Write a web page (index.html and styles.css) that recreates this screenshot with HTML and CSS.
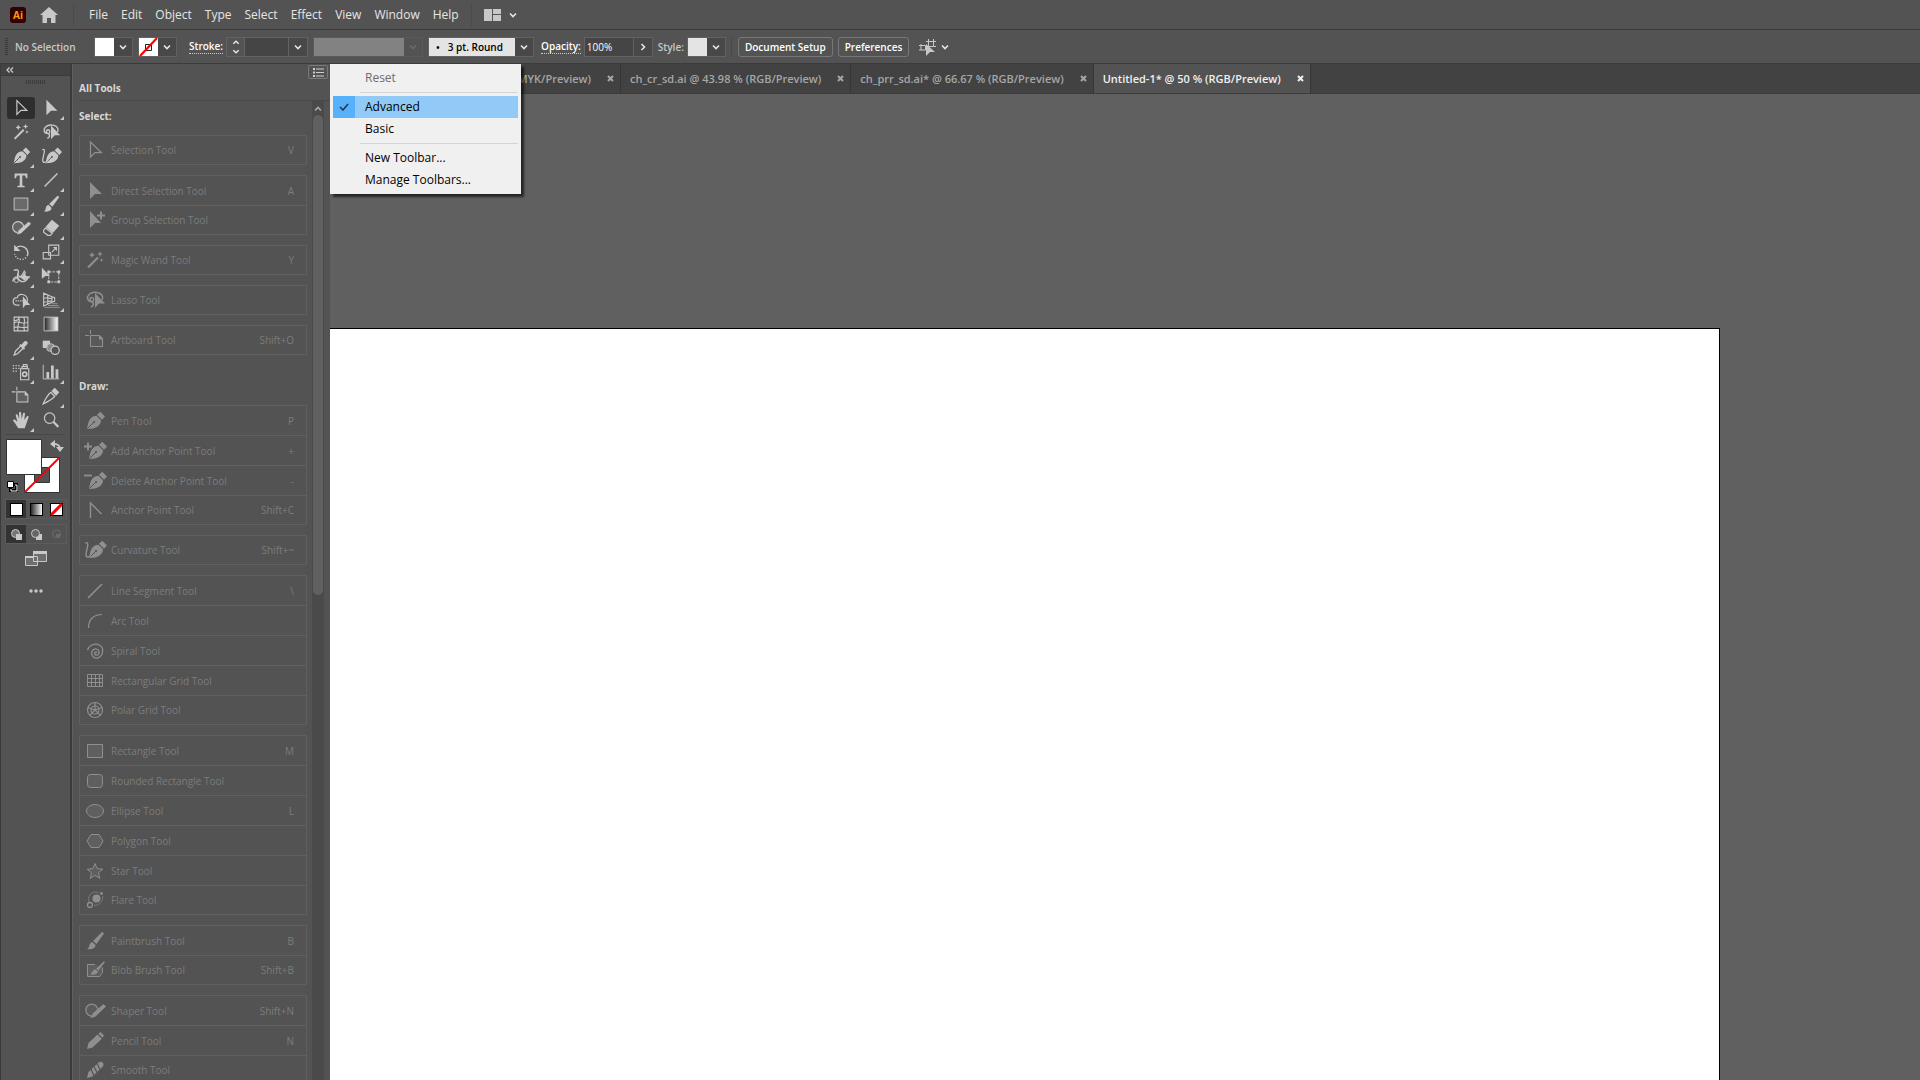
FILE: index.html
```html
<!DOCTYPE html>
<html lang="en">
<head>
	<meta charset="utf-8">
	<title>Untitled-1* @ 50 % (RGB/Preview)</title>
	<link rel="stylesheet" href="styles.css">
</head>
<body>
<!-- icon sprite -->
<svg class="sprite" aria-hidden="true">
	<defs>
		<linearGradient id="fade"><stop offset="0" stop-color="#222"/><stop offset="1" stop-color="#fff"/></linearGradient>
	</defs>
	<symbol id="chevron" viewBox="0 0 10 10"><path d="M2 3.5l3 3 3-3" fill="none" stroke="currentColor" stroke-width="1.6"/></symbol>
	<symbol id="selection" viewBox="0 0 24 24"><path d="M7.5 4v15l4.400-4.400h6.400z" fill="none" stroke="currentColor" stroke-width="1.300"/></symbol>
	<symbol id="direct" viewBox="0 0 24 24"><path d="M7 3v17l5-5h7z" fill="currentColor"/></symbol>
	<symbol id="group" viewBox="0 0 24 24"><path d="M7 3v17l5-5h6z" fill="currentColor"/><path d="M18 3.500v8M14 7.500h8" stroke="currentColor" stroke-width="2"/></symbol>
	<symbol id="wand" viewBox="0 0 24 24"><path d="M5 19.500L15 9.500" stroke="currentColor" stroke-width="2.200"/><path d="M9 4l.9 2.100L12 7l-2.100.9L9 10l-.9-2.100L6 7l2.100-.9zM17 3l.8 2.200L20 6l-2.200.8L17 9l-.8-2.200L14 6l2.200-.8zM18.500 10l.6 1.400 1.400.6-1.400.6-.6 1.400-.6-1.400-1.400-.6 1.400-.6z" fill="currentColor"/></symbol>
	<symbol id="lasso" viewBox="0 0 24 24"><path d="M9 13.500C4 14 3.500 9 6 6.500c4-3.500 12-2.500 13.500 2 .4 1.200 0 2.500-.5 3.500M9 14c2.500-1 2-4.500-.3-4.500S6.500 13 9 14s1.500 4-1 5" fill="none" stroke="currentColor" stroke-width="1.500"/><path d="M12 5v15l4-4.500h6z" fill="currentColor"/></symbol>
	<symbol id="pen" viewBox="0 0 24 24"><path d="M4 20c1-4 1-8 4-11 1.500-1.500 3.500-2 5.500-2.200l4.500 4.400c0 2-.8 4-2.500 5.500C12 20 8 19.500 4 20zM14 5.800l3.300-3 4.700 4.700-3 3.300z" fill="currentColor"/><path d="M4.500 19.500l6-6" stroke="#535353"/><circle cx="11" cy="13" r="1.100" fill="#535353"/></symbol>
	<symbol id="pen-add" viewBox="0 0 24 24"><use href="#pen" x="2"/><path d="M5 3.500v8M1 7.500h8" stroke="currentColor" stroke-width="1.800"/></symbol>
	<symbol id="pen-del" viewBox="0 0 24 24"><use href="#pen" x="2"/><path d="M1 6.500h8" stroke="currentColor" stroke-width="1.800"/></symbol>
	<symbol id="anchor" viewBox="0 0 24 24"><path d="M7.500 20V5L18.500 16" fill="none" stroke="currentColor" stroke-width="1.400"/></symbol>
	<symbol id="curvature" viewBox="0 0 24 24"><use href="#pen" x="2"/><path d="M2.500 5c3-1 2.500 2 1.500 6s-2 8 1 8 2.500-2 4-4" fill="none" stroke="currentColor" stroke-width="1.400"/></symbol>
	<symbol id="type" viewBox="0 0 24 24"><path d="M5 5h14v5h-1.500l-1-3H13.400v11l2.600.6V20H8v-1.400l2.600-.6V7H7.500l-1 3H5z" fill="currentColor"/></symbol>
	<symbol id="line" viewBox="0 0 24 24"><path d="M5 19L19 5" stroke="currentColor" stroke-width="1.600"/></symbol>
	<symbol id="rect" viewBox="0 0 24 24"><path d="M4.500 5.500h15v13h-15z" fill="currentColor" fill-opacity=".2" stroke="currentColor"/></symbol>
	<symbol id="brush" viewBox="0 0 24 24"><path d="M10 12L18.500 3.500c1.500-1 2.800.4 2 1.800L13.500 15zM9.500 13.200l3 2.800c.3 3-3.500 4.700-8.500 4.200 2-1.200 2-2.500 2.500-4.500s2-2.500 3-2.500z" fill="currentColor"/></symbol>
	<symbol id="shaper" viewBox="0 0 24 24"><path d="M14.500 13A6 6 0 1 0 8 17" fill="currentColor" fill-opacity=".15" stroke="currentColor" stroke-width="1.300"/><path d="M8 18.500l2-4L20.500 5.500l2 2L12 17.500z" fill="currentColor" stroke="currentColor" stroke-width=".8"/></symbol>
	<symbol id="eraser" viewBox="0 0 24 24"><path d="M13 3l8 6.500-7 8-8-6.500z" fill="currentColor"/><path d="M6 12l7.300 5.800-2 2.200H8.500L4 16.500v-2z" fill="none" stroke="currentColor" stroke-width="1.300"/></symbol>
	<symbol id="rotate" viewBox="0 0 24 24"><path d="M6 8.500C10 3 19 6 19.500 13c0 1.500-.4 2.500-.8 3.500" fill="none" stroke="currentColor" stroke-width="1.500"/><path d="M4.500 4v7h7z" fill="currentColor"/><path d="M17.500 18C14 21.500 7 21 5 14" fill="none" stroke="currentColor" stroke-width="1.400" stroke-dasharray="1.500 1.500"/></symbol>
	<symbol id="scale" viewBox="0 0 24 24"><path d="M9.500 4.500h11v11h-11zM3.500 12.500h8v7h-8zM13 12l4-4" fill="none" stroke="currentColor" stroke-width="1.200"/><path d="M14 6.500h4.500V11z" fill="currentColor"/></symbol>
	<symbol id="width" viewBox="0 0 24 24"><path d="M4 6c4-2 6 0 5 3s-2 4 1 4 5-5 6-7M3 18c1-5 4-6 6-3s5 4 8 2 2-4 5-4" fill="none" stroke="currentColor" stroke-width="1.500"/><circle cx="7" cy="17" r="2.200" fill="#535353" stroke="currentColor"/><path d="M8 8c2 4 3 5 5 4s2-5 5-5c-3 4 0 6 3 5-1 4-5 6-8 3-2-2-5-2-5-7z" fill="currentColor"/></symbol>
	<symbol id="transform" viewBox="0 0 24 24"><path d="M9.500 7.500h11v11h-11z" fill="none" stroke="currentColor" stroke-dasharray="3 1"/><path d="M8 6h3v3H8zM19 6h3v3h-3zM8 17h3v3H8zM19 17h3v3h-3zM2 3v12l4-3h5z" fill="currentColor"/></symbol>
	<symbol id="builder" viewBox="0 0 24 24"><path d="M10.500 17.500H8c-6 0-6-8 0-8 1-5 10-5 11 2v2" fill="none" stroke="currentColor" stroke-width="1.300"/><path d="M6 13h9" stroke="currentColor" stroke-width="1.400" stroke-dasharray="1.500 1"/><path d="M14 8v13l3-3.500h5z" fill="currentColor"/></symbol>
	<symbol id="perspective" viewBox="0 0 24 24"><path d="M4 4.500v14l9-4V8.500zM4 9.500l9 1M4 14.500l9-1.500M8.500 6.500v10M13 8.500l3 1v4l-3 1" fill="none" stroke="currentColor" stroke-width="1.200"/><path d="M13 16h6M9 18h11M5 20h17" stroke="currentColor" stroke-opacity=".6"/></symbol>
	<symbol id="mesh" viewBox="0 0 24 24"><path d="M4.500 4.500h15v15h-15zM4.500 11c4-4 9 3 15-1M4.500 16c5-3 9 2 15-1M9 4.500c4 5-3 9 0 15M15 4.500c3 5-2 10 1 15M4.500 8c3 1 5-1 6-3.500" fill="none" stroke="currentColor" stroke-width="1.200"/></symbol>
	<symbol id="gradient" viewBox="0 0 24 24"><path d="M4.500 4.500h15v15h-15z" fill="url(#fade)" stroke="currentColor"/></symbol>
	<symbol id="dropper" viewBox="0 0 24 24"><path d="M12.500 8.500l3-3.500c2-2 5 .8 3.300 3l-3.300 3.500 1 1-1.500 1.500-5-5L11.500 7.500z" fill="currentColor"/><path d="M11.500 10L6 15.500l-1.500 4.200 4-1.700L14 12.500" fill="none" stroke="currentColor" stroke-width="1.400"/></symbol>
	<symbol id="blend" viewBox="0 0 24 24"><path d="M3 4h8v8H3z" fill="currentColor"/><rect x="7.500" y="7.500" width="8" height="8" rx="3" fill="#8a8a8a" stroke="currentColor"/><circle cx="16.500" cy="14.500" r="4.500" fill="#535353" stroke="currentColor" stroke-width="1.300"/></symbol>
	<symbol id="sprayer" viewBox="0 0 24 24"><path d="M11.500 8.500h9v12h-9zM13 6h6v2h-6zM14.500 4h4v2h-4z" fill="none" stroke="currentColor" stroke-width="1.200"/><circle cx="16" cy="14.500" r="2.300" fill="none" stroke="currentColor" stroke-width="1.800"/><path d="M3 5h9M3 8h8M3 11h5" stroke="currentColor" stroke-width="1.500" stroke-dasharray="1.500 1.500"/></symbol>
	<symbol id="graph" viewBox="0 0 24 24"><path d="M3.500 4v15.500H21" fill="none" stroke="currentColor"/><path d="M7 12h3v7H7zM12 5h3v14h-3zM17 9h3v10h-3z" fill="currentColor"/></symbol>
	<symbol id="artboard" viewBox="0 0 24 24"><path d="M7.500 7.500h9l3 3v8h-12zM7.500 2v4M2 7.500h4" fill="currentColor" fill-opacity=".12" stroke="currentColor" stroke-width="1.100"/><path d="M16 7.500v4h4z" fill="currentColor"/></symbol>
	<symbol id="slice" viewBox="0 0 24 24"><path d="M3.500 20.500C6 15 8 11 12 8l4 4.500c-3 3-7 5.500-12.500 8z" fill="none" stroke="currentColor" stroke-width="1.400"/><path d="M12.500 6.500L16 3l5 5-3.500 4z" fill="currentColor"/></symbol>
	<symbol id="hand" viewBox="0 0 24 24"><path d="M9 21C7 18 5.500 15 3.500 13c-.8-1 .8-2.200 2-1.200L8 14 6.300 7c-.3-1.500 1.700-1.800 2.200-.5L10 11 9.800 4.500c0-1.500 2.300-1.500 2.400 0L12.700 11l1.500-6c.3-1.300 2.300-1 2.200.5L15.500 12l3-4c.8-1 2.300-.2 1.800 1L17.500 17 16 21z" fill="currentColor"/></symbol>
	<symbol id="zoom" viewBox="0 0 24 24"><circle cx="10.500" cy="10" r="5.700" fill="none" stroke="currentColor" stroke-width="1.300"/><path d="M14.500 14l5.500 5.500" stroke="currentColor" stroke-width="2.400"/></symbol>
	<symbol id="arc" viewBox="0 0 24 24"><path d="M5.500 19C5.500 11 10 5.500 19 5.500" fill="none" stroke="currentColor" stroke-width="1.200"/></symbol>
	<symbol id="spiral" viewBox="0 0 24 24"><path d="M4.500 11C6 6 12 3.500 17 6.500c4.500 3 3 11-2.500 12.500-5 1-7.500-5-4.500-8 3-2.500 7 0 6 3.500-1 2.500-4.500 2-4.300-.5.100-1.300 1.800-1.500 2.300-.3" fill="none" stroke="currentColor" stroke-width="1.300"/></symbol>
	<symbol id="grid" viewBox="0 0 24 24"><path d="M4.500 5.500h15v12h-15zM4.500 9.500h15M4.500 13.500h15M8.500 5.500v12M12.500 5.500v12M16.500 5.500v12" fill="none" stroke="currentColor"/></symbol>
	<symbol id="polar" viewBox="0 0 24 24"><g fill="none" stroke="currentColor" stroke-width="1.200"><circle cx="12" cy="12" r="7.500"/><circle cx="12" cy="12" r="4"/><path d="M12 4.500V12L6.500 17.500M12 12l5.500 5.500M12 12l7-2.500M12 12L5 9.500"/></g></symbol>
	<symbol id="round-rect" viewBox="0 0 24 24"><rect x="4.500" y="5.500" width="15" height="13" rx="3" fill="currentColor" fill-opacity=".2" stroke="currentColor"/></symbol>
	<symbol id="ellipse" viewBox="0 0 24 24"><ellipse cx="12" cy="12" rx="8.500" ry="6.500" fill="currentColor" fill-opacity=".2" stroke="currentColor"/></symbol>
	<symbol id="polygon" viewBox="0 0 24 24"><path d="M4 12l4-6.500h8l4 6.500-4 6.500H8z" fill="currentColor" fill-opacity=".2" stroke="currentColor"/></symbol>
	<symbol id="star" viewBox="0 0 24 24"><path d="M12 4.500l2.200 5.200 5.600.5-4.300 3.600 1.300 5.500L12 16.400l-4.800 2.900 1.300-5.500-4.300-3.600 5.600-.5z" fill="currentColor" fill-opacity=".2" stroke="currentColor"/></symbol>
	<symbol id="flare" viewBox="0 0 24 24"><circle cx="13.500" cy="10.500" r="4" fill="currentColor"/><path d="M6 14C3.500 6 12 2 16 5M19.500 8c1 5-3 9.500-8.500 9.500" fill="none" stroke="currentColor" stroke-opacity=".6"/><circle cx="7" cy="17" r="2.500" fill="none" stroke="currentColor" stroke-width="1.300"/><circle cx="18.500" cy="5.500" r="1.400" fill="currentColor"/></symbol>
	<symbol id="blob" viewBox="0 0 24 24"><path d="M12 6.500H4.500v12h12l3-4v-5" fill="currentColor" fill-opacity=".2" stroke="currentColor"/><path d="M13 11l7.500-7.500 1.500.5-6.500 8.500zM12.500 11.500l2.500 2c-1 3-4 3.500-8 3 2.500-1.500 2-4.500 5.500-5z" fill="currentColor"/></symbol>
	<symbol id="pencil" viewBox="0 0 24 24"><path d="M4 20l1.500-6 9-8.500 4.300 4.200L9.500 18.500zM15.500 4.700L17.500 3 21 6.500l-1.500 2.200z" fill="currentColor"/></symbol>
	<symbol id="smooth" viewBox="0 0 24 24"><path d="M4 20l1.500-6 10-9.500c3-2.500 6.500 1 4.300 4L9.500 18.500z" fill="currentColor"/><path d="M8 11l3 7M11 8.500l3 6M14 5.500l3 6" stroke="#535353" stroke-width="1.200"/></symbol>
</svg>

<header class="menubar">
	<svg class="logo" viewBox="0 0 16 16" role="img" aria-label="Ai"><rect width="16" height="16" rx="3" fill="#300"/><text x="8" y="12" text-anchor="middle">Ai</text></svg>
	<svg class="home" viewBox="0 0 18 16"><path d="M9 0l9 8h-2.500v8h-4.500v-5H7v5H2.500V8H0z" fill="#c8c8c8"/></svg>
	<nav class="menus">
		<a href="#">File</a>
		<a href="#">Edit</a>
		<a href="#">Object</a>
		<a href="#">Type</a>
		<a href="#">Select</a>
		<a href="#">Effect</a>
		<a href="#">View</a>
		<a href="#">Window</a>
		<a href="#">Help</a>
	</nav>
	<button class="workspace" aria-label="Arrange documents">
		<svg width="17" height="12" viewBox="0 0 17 12"><path d="M0 0h8v12H0zM9 0h8v5H9zM9 6h8v6H9z" fill="#c8c8c8"/></svg>
		<svg class="chev"><use href="#chevron"/></svg>
	</button>
</header>

<section class="options">
	<span class="grip"></span>
	<span class="status">No Selection</span>
	<div class="field fill">
		<button class="swatch" aria-label="Fill"></button>
		<button class="drop" aria-label="Fill options"><svg class="chev"><use href="#chevron"/></svg></button>
	</div>
	<div class="field stroke">
		<button class="swatch" aria-label="Stroke color"><svg width="19" height="20" viewBox="0 0 19 20"><path d="M6.500 7.500h6v6h-6z" fill="#fff" stroke="#222"/><path d="M1 19L18 1" stroke="#f00" stroke-width="2.200"/></svg></button>
		<button class="drop" aria-label="Stroke options"><svg class="chev"><use href="#chevron"/></svg></button>
	</div>
	<label class="caption link" for="weight">Stroke:</label>
	<div class="field weight">
		<button class="stepper" aria-label="Step stroke weight"><svg class="chev up"><use href="#chevron"/></svg><svg class="chev"><use href="#chevron"/></svg></button>
		<input id="weight" type="text">
		<button class="drop" aria-label="Stroke weights"><svg class="chev"><use href="#chevron"/></svg></button>
	</div>
	<div class="field profile">
		<span class="profile-box"></span>
		<button class="drop" aria-label="Width profile" disabled><svg class="chev"><use href="#chevron"/></svg></button>
	</div>
	<div class="field brush">
		<select aria-label="Brush definition"><option>•&nbsp;&nbsp;&nbsp;3 pt. Round</option></select>
		<button class="drop" aria-label="Brushes"><svg class="chev"><use href="#chevron"/></svg></button>
	</div>
	<label class="caption link" for="opacity">Opacity:</label>
	<div class="field opacity">
		<input id="opacity" type="text" value="100%">
		<button class="drop" aria-label="Opacity slider"><svg class="chev right"><use href="#chevron"/></svg></button>
	</div>
	<span class="caption">Style:</span>
	<div class="field style">
		<button class="swatch" aria-label="Graphic style"></button>
		<button class="drop" aria-label="Graphic styles"><svg class="chev"><use href="#chevron"/></svg></button>
	</div>
	<div class="doc-buttons">
		<button>Document Setup</button>
		<button>Preferences</button>
	</div>
	<button class="isolate" aria-label="Select similar objects">
		<svg width="17" height="18" viewBox="0 0 17 18"><path d="M2 7.500h4.500V12H2zM9.500 3.500h5v5h-5zM0 7.500h2M0 12h2M9.500 1v2.500H7M14.500 1v2.500H17M14.500 8.500H17M2 6v1" fill="none" stroke="#c8c8c8"/><path d="M7 6v12l4-4h5z" fill="#c8c8c8"/></svg>
		<svg class="chev"><use href="#chevron"/></svg>
	</button>
</section>

<div class="workarea">
	<aside class="toolbar">
		<div class="toolbar-head"><svg width="8" height="6" viewBox="0 0 8 6"><path d="M3.500 .5L1 3l2.500 2.500M7 .5L4.500 3 7 5.500" fill="none" stroke="#ccc" stroke-width="1.300"/></svg></div>
		<div class="toolbar-grip"></div>
		<div class="tools">
			<button class="active" aria-label="Selection Tool"><svg><use href="#selection"/></svg></button>
			<button class="more" aria-label="Direct Selection Tool"><svg><use href="#direct"/></svg></button>
			<button aria-label="Magic Wand Tool"><svg><use href="#wand"/></svg></button>
			<button aria-label="Lasso Tool"><svg><use href="#lasso"/></svg></button>
			<button class="more" aria-label="Pen Tool"><svg><use href="#pen"/></svg></button>
			<button aria-label="Curvature Tool"><svg><use href="#curvature"/></svg></button>
			<button class="more" aria-label="Type Tool"><svg><use href="#type"/></svg></button>
			<button class="more" aria-label="Line Segment Tool"><svg><use href="#line"/></svg></button>
			<button class="more" aria-label="Rectangle Tool"><svg><use href="#rect"/></svg></button>
			<button class="more" aria-label="Paintbrush Tool"><svg><use href="#brush"/></svg></button>
			<button class="more" aria-label="Shaper Tool"><svg><use href="#shaper"/></svg></button>
			<button class="more" aria-label="Eraser Tool"><svg><use href="#eraser"/></svg></button>
			<button class="more" aria-label="Rotate Tool"><svg><use href="#rotate"/></svg></button>
			<button class="more" aria-label="Scale Tool"><svg><use href="#scale"/></svg></button>
			<button class="more" aria-label="Width Tool"><svg><use href="#width"/></svg></button>
			<button aria-label="Free Transform Tool"><svg><use href="#transform"/></svg></button>
			<button class="more" aria-label="Shape Builder Tool"><svg><use href="#builder"/></svg></button>
			<button class="more" aria-label="Perspective Grid Tool"><svg><use href="#perspective"/></svg></button>
			<button aria-label="Mesh Tool"><svg><use href="#mesh"/></svg></button>
			<button aria-label="Gradient Tool"><svg><use href="#gradient"/></svg></button>
			<button class="more" aria-label="Eyedropper Tool"><svg><use href="#dropper"/></svg></button>
			<button aria-label="Blend Tool"><svg><use href="#blend"/></svg></button>
			<button class="more" aria-label="Symbol Sprayer Tool"><svg><use href="#sprayer"/></svg></button>
			<button class="more" aria-label="Column Graph Tool"><svg><use href="#graph"/></svg></button>
			<button aria-label="Artboard Tool"><svg><use href="#artboard"/></svg></button>
			<button class="more" aria-label="Slice Tool"><svg><use href="#slice"/></svg></button>
			<button class="more" aria-label="Hand Tool"><svg><use href="#hand"/></svg></button>
			<button aria-label="Zoom Tool"><svg><use href="#zoom"/></svg></button>
		</div>
		<div class="colors">
			<svg width="60" height="56" viewBox="0 0 60 56">
				<path d="M18.500 18.500h35v35h-35z" fill="#fff" stroke="#333"/>
				<path d="M28.500 28.500h15v15h-15z" fill="#535353" stroke="#333"/>
				<path d="M19 53L53 19" stroke="#f00" stroke-width="2"/>
				<path d="M.5 .5h35v35H.5z" fill="#fff" stroke="#333"/>
				<path d="M48 5c4 0 6 1 6 6" fill="none" stroke="#c8c8c8" stroke-width="2"/>
				<path d="M49 1v8l-5-4zM50 8h8l-4 5z" fill="#c8c8c8"/>
				<path d="M4.500 45.500h6v6h-6z" fill="none" stroke="#000" stroke-width="3"/>
				<path d="M1.500 42.500h6v6h-6z" fill="#fff" stroke="#000"/>
				<path d="M9 46h2v6H5v-2" fill="none" stroke="#fff"/>
			</svg>
		</div>
		<div class="modes">
			<button class="active" aria-label="Color"><svg><rect x=".5" y=".5" width="12" height="12" fill="#fff" stroke="#000"/></svg></button>
			<button aria-label="Gradient"><svg><rect x=".5" y=".5" width="12" height="12" fill="url(#fade)" stroke="#000"/></svg></button>
			<button aria-label="None"><svg><rect x=".5" y=".5" width="12" height="12" fill="#fff" stroke="#000"/><path d="M1 12L12 1" stroke="#f00" stroke-width="3"/></svg></button>
		</div>
		<div class="modes draw">
			<button class="active" aria-label="Draw Normal"><svg><circle cx="5.500" cy="5.500" r="4" fill="#777" stroke="#c8c8c8"/><path d="M6 6h6v6H6z" fill="#c8c8c8"/></svg></button>
			<button aria-label="Draw Behind"><svg><path d="M6 6h6v6H6z" fill="#c8c8c8"/><circle cx="5.500" cy="5.500" r="4" fill="#666" stroke="#c8c8c8"/></svg></button>
			<button aria-label="Draw Inside" disabled><svg><circle cx="6.500" cy="6" r="4" fill="none" stroke="#6c6c6c"/><path d="M6 6h4v3H6z" fill="#6c6c6c"/></svg></button>
		</div>
		<button class="screen" aria-label="Change Screen Mode"><svg width="22" height="16" viewBox="0 0 22 16"><path d="M.5 5.500h12v9H.5zM8.500 .5h13v10h-13z" fill="#6e6e6e" stroke="#c8c8c8"/><path d="M8 0h14v3H8zM0 5h8v2H0z" fill="#c8c8c8"/></svg></button>
		<button class="edit" aria-label="Edit Toolbar"><svg width="14" height="4" viewBox="0 0 14 4"><circle cx="2" cy="2" r="1.700"/><circle cx="7" cy="2" r="1.700"/><circle cx="12" cy="2" r="1.700"/></svg></button>
	</aside>

	<aside class="drawer">
		<div class="drawer-head">
			<h2>All Tools</h2>
			<button class="list-button" aria-label="Toolbar menu"><svg width="11" height="9" viewBox="0 0 11 9"><path d="M0 1h2M0 4.500h2M0 8h2" stroke="#d0d0d0" stroke-width="2"/><path d="M3 1h8M3 4.500h8M3 8h8" stroke="#d0d0d0"/></svg></button>
			<ul class="popup">
				<li class="disabled">Reset</li>
				<li class="rule"></li>
				<li class="checked"><span class="check"><svg width="10" height="8" viewBox="0 0 10 8"><path d="M1 4l3 3 5-6" fill="none" stroke="#234" stroke-width="1.500"/></svg></span>Advanced</li>
				<li>Basic</li>
				<li class="rule"></li>
				<li>New Toolbar...</li>
				<li>Manage Toolbars...</li>
			</ul>
		</div>
		<div class="drawer-body">
			<div class="list">
				<h3>Select:</h3>
				<ul>
					<li><svg><use href="#selection"/></svg>Selection Tool<kbd>V</kbd></li>
				</ul>
				<ul>
					<li><svg><use href="#direct"/></svg>Direct Selection Tool<kbd>A</kbd></li>
					<li><svg><use href="#group"/></svg>Group Selection Tool</li>
				</ul>
				<ul>
					<li><svg><use href="#wand"/></svg>Magic Wand Tool<kbd>Y</kbd></li>
				</ul>
				<ul>
					<li><svg><use href="#lasso"/></svg>Lasso Tool</li>
				</ul>
				<ul>
					<li><svg><use href="#artboard"/></svg>Artboard Tool<kbd>Shift+O</kbd></li>
				</ul>
				<h3 class="next">Draw:</h3>
				<ul>
					<li><svg><use href="#pen"/></svg>Pen Tool<kbd>P</kbd></li>
					<li><svg><use href="#pen-add"/></svg>Add Anchor Point Tool<kbd>+</kbd></li>
					<li><svg><use href="#pen-del"/></svg>Delete Anchor Point Tool<kbd>-</kbd></li>
					<li><svg><use href="#anchor"/></svg>Anchor Point Tool<kbd>Shift+C</kbd></li>
				</ul>
				<ul>
					<li><svg><use href="#curvature"/></svg>Curvature Tool<kbd>Shift+~</kbd></li>
				</ul>
				<ul>
					<li><svg><use href="#line"/></svg>Line Segment Tool<kbd>\</kbd></li>
					<li><svg><use href="#arc"/></svg>Arc Tool</li>
					<li><svg><use href="#spiral"/></svg>Spiral Tool</li>
					<li><svg><use href="#grid"/></svg>Rectangular Grid Tool</li>
					<li><svg><use href="#polar"/></svg>Polar Grid Tool</li>
				</ul>
				<ul>
					<li><svg><use href="#rect"/></svg>Rectangle Tool<kbd>M</kbd></li>
					<li><svg><use href="#round-rect"/></svg>Rounded Rectangle Tool</li>
					<li><svg><use href="#ellipse"/></svg>Ellipse Tool<kbd>L</kbd></li>
					<li><svg><use href="#polygon"/></svg>Polygon Tool</li>
					<li><svg><use href="#star"/></svg>Star Tool</li>
					<li><svg><use href="#flare"/></svg>Flare Tool</li>
				</ul>
				<ul>
					<li><svg><use href="#brush"/></svg>Paintbrush Tool<kbd>B</kbd></li>
					<li><svg><use href="#blob"/></svg>Blob Brush Tool<kbd>Shift+B</kbd></li>
				</ul>
				<ul>
					<li><svg><use href="#shaper"/></svg>Shaper Tool<kbd>Shift+N</kbd></li>
					<li><svg><use href="#pencil"/></svg>Pencil Tool<kbd>N</kbd></li>
					<li><svg><use href="#smooth"/></svg>Smooth Tool</li>
				</ul>
			</div>
			<div class="scrollbar">
				<svg class="chev up"><use href="#chevron"/></svg>
				<div class="thumb"></div>
			</div>
		</div>
	</aside>

	<main class="document">
		<div class="tabs">
			<div class="tab first"><a href="#">(CMYK/Preview)</a><button aria-label="Close"><svg><path d="M1 1l5 5M6 1L1 6"/></svg></button></div>
			<div class="tab"><a href="#">ch_cr_sd.ai @ 43.98 % (RGB/Preview)</a><button aria-label="Close"><svg><path d="M1 1l5 5M6 1L1 6"/></svg></button></div>
			<div class="tab"><a href="#">ch_prr_sd.ai* @ 66.67 % (RGB/Preview)</a><button aria-label="Close"><svg><path d="M1 1l5 5M6 1L1 6"/></svg></button></div>
			<div class="tab current"><a href="#">Untitled-1* @ 50 % (RGB/Preview)</a><button aria-label="Close"><svg><path d="M1 1l5 5M6 1L1 6"/></svg></button></div>
		</div>
		<div class="canvas">
			<div class="artboard"></div>
		</div>
	</main>
</div>
</body>
</html>
```

FILE: styles.css
```css
* {
	margin: 0;
	padding: 0;
	box-sizing: border-box;
}

body {
	display: flex;
	flex-direction: column;
	height: 100vh;
	overflow: hidden;
	background: #535353;
	color: #e6e6e6;
	font-family: "Open Sans", "Noto Sans", sans-serif;
	font-size: 10px;
}

a {
	color: inherit;
	text-decoration: none;
}

ul {
	list-style: none;
}

button,
input,
select {
	font: inherit;
	color: inherit;
	background: none;
	border: none;
	outline: none;
}

button {
	display: flex;
	align-items: center;
	justify-content: center;
}

.sprite {
	position: absolute;
	width: 0;
	height: 0;
}

.chev {
	width: 10px;
	height: 10px;
	color: #e6e6e6;
}

.up {
	transform: rotate(180deg);
}

.right {
	transform: rotate(-90deg);
}

/* menu bar */
.menubar {
	display: flex;
	align-items: center;
	flex: none;
	height: 30px;
	padding: 0 10px;
	border-bottom: 1px solid #3b3b3b;
}

.logo {
	width: 16px;
	height: 16px;
}

.logo text {
	fill: #ff9a00;
	font-size: 10px;
	font-weight: bold;
}

.home {
	width: 18px;
	height: 16px;
	margin-left: 14px;
}

.menus {
	display: flex;
	gap: 13px;
	margin-left: 15px;
	padding: 0 12px 0 15px;
	border-left: 1px solid #4a4a4a;
	border-right: 1px solid #4a4a4a;
	font-size: 12px;
	line-height: 22px;
}

.workspace {
	gap: 7px;
	margin-left: 12px;
}

/* options bar */
.options {
	display: flex;
	align-items: center;
	flex: none;
	height: 34px;
	padding-left: 5px;
	border-bottom: 1px solid #3b3b3b;
}

.grip {
	width: 3px;
	height: 18px;
	background: repeating-linear-gradient(#3b3b3b 0 1px, transparent 1px 2px);
}

.status {
	width: 82px;
	padding-left: 7px;
	color: #c8c8c8;
	font-weight: 600;
}

.field {
	display: flex;
	height: 20px;
	border: 1px solid #626262;
	margin-right: 5px;
}

.fill {
	margin-left: 4px;
}

.stroke {
	margin-right: 10px;
}

.swatch {
	width: 19px;
	background: #fff;
}

.drop {
	width: 18px;
	background: #484848;
}

.caption {
	margin: 0 3px 0 2px;
	color: #c8c8c8;
	font-weight: 600;
}

.link {
	color: #fff;
	border-bottom: 1px dotted #ccc;
	line-height: 13px;
}

.stepper {
	flex-direction: column;
	width: 17px;
}

.weight input {
	width: 45px;
	background: #454545;
	border: solid #626262;
	border-width: 0 1px;
}

.profile {
	border-color: #5a5a5a;
}

.profile-box {
	width: 90px;
	background: #828282;
}

.profile .drop {
	background: none;
}

.profile .chev {
	color: #6c6c6c;
}

.brush select {
	width: 86px;
	padding-left: 7px;
	background: #e4e4e4;
	color: #000;
	font-weight: 600;
	appearance: none;
}

.opacity {
	margin-right: 3px;
}

.opacity input {
	width: 49px;
	padding-left: 2px;
	background: #454545;
	border-right: 1px solid #626262;
	color: #fff;
}

.style .swatch {
	background: #e4e4e4;
}

.doc-buttons {
	display: flex;
	gap: 5px;
	padding-left: 6px;
	border-left: 1px solid #484848;
}

.doc-buttons button {
	height: 20px;
	padding: 0 6px;
	border: 1px solid #777;
	border-radius: 3px;
	color: #fff;
	font-weight: 600;
}

.isolate {
	gap: 4px;
	margin-left: 10px;
}

.workarea {
	display: flex;
	flex: 1;
	min-height: 0;
}

/* toolbar */
.toolbar {
	flex: none;
	width: 72px;
	border-left: 1px solid #3b3b3b;
	border-right: 2px solid #3b3b3b;
}

.toolbar-head {
	display: flex;
	align-items: center;
	height: 12px;
	padding-left: 5px;
	background: #434343;
	border-bottom: 1px solid #3b3b3b;
}

.toolbar-grip {
	width: 19px;
	height: 4px;
	margin: 4px auto 13px;
	background: repeating-linear-gradient(90deg, #3b3b3b 0 1px, transparent 1px 2px);
}

.tools {
	display: grid;
	grid-template-columns: 28px 28px;
	grid-auto-rows: 22px;
	gap: 2px;
	padding: 0 6px 3px;
}

.tools button {
	position: relative;
	color: #c8c8c8;
}

.tools svg {
	width: 22px;
	height: 22px;
}

.tools .active {
	background: #2e2e2e;
	border-radius: 3px;
}

.more::after {
	content: "";
	position: absolute;
	right: 1px;
	bottom: -1px;
	border-left: 4px solid transparent;
	border-bottom: 4px solid #c8c8c8;
}

.colors {
	height: 65px;
	margin: 0 5px;
	padding-top: 4px;
	border-top: 1px solid #484848;
}

.modes {
	display: grid;
	grid-template-columns: repeat(3, 1fr);
	margin: 0 3px 0 4px;
	height: 20px;
	border: 1px solid #5c5c5c;
}

.modes svg {
	width: 13px;
	height: 13px;
}

.modes .active {
	background: #333;
}

.draw {
	margin-top: 5px;
}

.screen,
.edit {
	margin: 7px auto 0;
}

.edit {
	margin-top: 22px;
	fill: #c8c8c8;
}

/* all tools drawer */
.drawer {
	display: flex;
	flex-direction: column;
	flex: none;
	width: 258px;
	border-left: 1px solid #606060;
}

.drawer-head {
	position: relative;
	flex: none;
	height: 37px;
	margin-left: 6px;
	border-bottom: 1px solid #484848;
}

h2,
h3 {
	font-size: 10px;
	line-height: 14px;
	font-weight: bold;
	color: #d8d8d8;
}

h2 {
	padding-top: 17px;
}

.list-button {
	position: absolute;
	top: 1px;
	right: 2px;
	width: 20px;
	height: 14px;
	border: 1px solid #7a7a7a;
	border-radius: 2px;
}

.popup {
	position: absolute;
	z-index: 2;
	top: 0;
	left: 100%;
	width: 191px;
	padding: 3px;
	background: #f0f0f0;
	color: #000;
	font-size: 12px;
	line-height: 22px;
	box-shadow: 3px 3px 2px rgba(0, 0, 0, .6);
}

.popup li {
	display: flex;
	padding-left: 32px;
}

.popup .disabled {
	color: #6d6d6d;
}

.popup .rule {
	height: 1px;
	margin: 3px 0 3px 27px;
	background: #d4d4d4;
}

.popup .checked {
	padding-left: 0;
	background: #91c9f7;
}

.check {
	display: flex;
	align-items: center;
	justify-content: center;
	width: 22px;
	margin-right: 10px;
	background: #56b0fa;
}

.drawer-body {
	display: flex;
	flex: 1;
	min-height: 0;
	overflow: hidden;
}

.list {
	flex: 1;
	padding: 8px 5px 0 6px;
}

.list h3 {
	margin-bottom: 12px;
}

.list .next {
	margin-top: 24px;
}

.list ul {
	margin-bottom: 10px;
	border: 1px solid #606060;
	border-radius: 1px;
	color: #7c7c7c;
}

.list li {
	display: flex;
	align-items: center;
	height: 30px;
	padding: 0 12px 0 3px;
	border-bottom: 1px solid #606060;
}

.list li:last-child {
	height: 28px;
	border-bottom: none;
}

.list svg {
	width: 24px;
	height: 24px;
	margin-right: 4px;
	color: #8f8f8f;
}

kbd {
	margin-left: auto;
	font: inherit;
}

.scrollbar {
	width: 12px;
	margin-right: 6px;
	background: #4a4a4a;
}

.scrollbar .chev {
	display: block;
	margin: 3px auto 1px;
	color: #aaa;
}

.thumb {
	height: 49%;
	margin: 0 1px;
	background: #606060;
	border-radius: 5px;
}

/* document window */
.document {
	display: flex;
	flex-direction: column;
	flex: 1;
	min-width: 0;
}

.tabs {
	display: flex;
	flex: none;
	height: 30px;
	background: #424242;
	border-bottom: 1px solid #3b3b3b;
}

.tab {
	display: flex;
	align-items: center;
	gap: 16px;
	padding: 0 6px 0 9px;
	border-right: 1px solid #363636;
	color: #a6a6a6;
	font-size: 11px;
	font-weight: 600;
}

.tab.first {
	justify-content: flex-end;
	width: 291px;
}

.tab.current {
	background: #535353;
	color: #f0f0f0;
}

.tab svg {
	width: 7px;
	height: 7px;
	stroke: currentColor;
	stroke-width: 2;
}

.canvas {
	display: flex;
	flex: 1;
	padding: 234px 200px 0 0;
	background: #606060;
}

.artboard {
	flex: 1;
	background: #fff;
	border: solid #000;
	border-width: 1px 1px 0 0;
}
```
